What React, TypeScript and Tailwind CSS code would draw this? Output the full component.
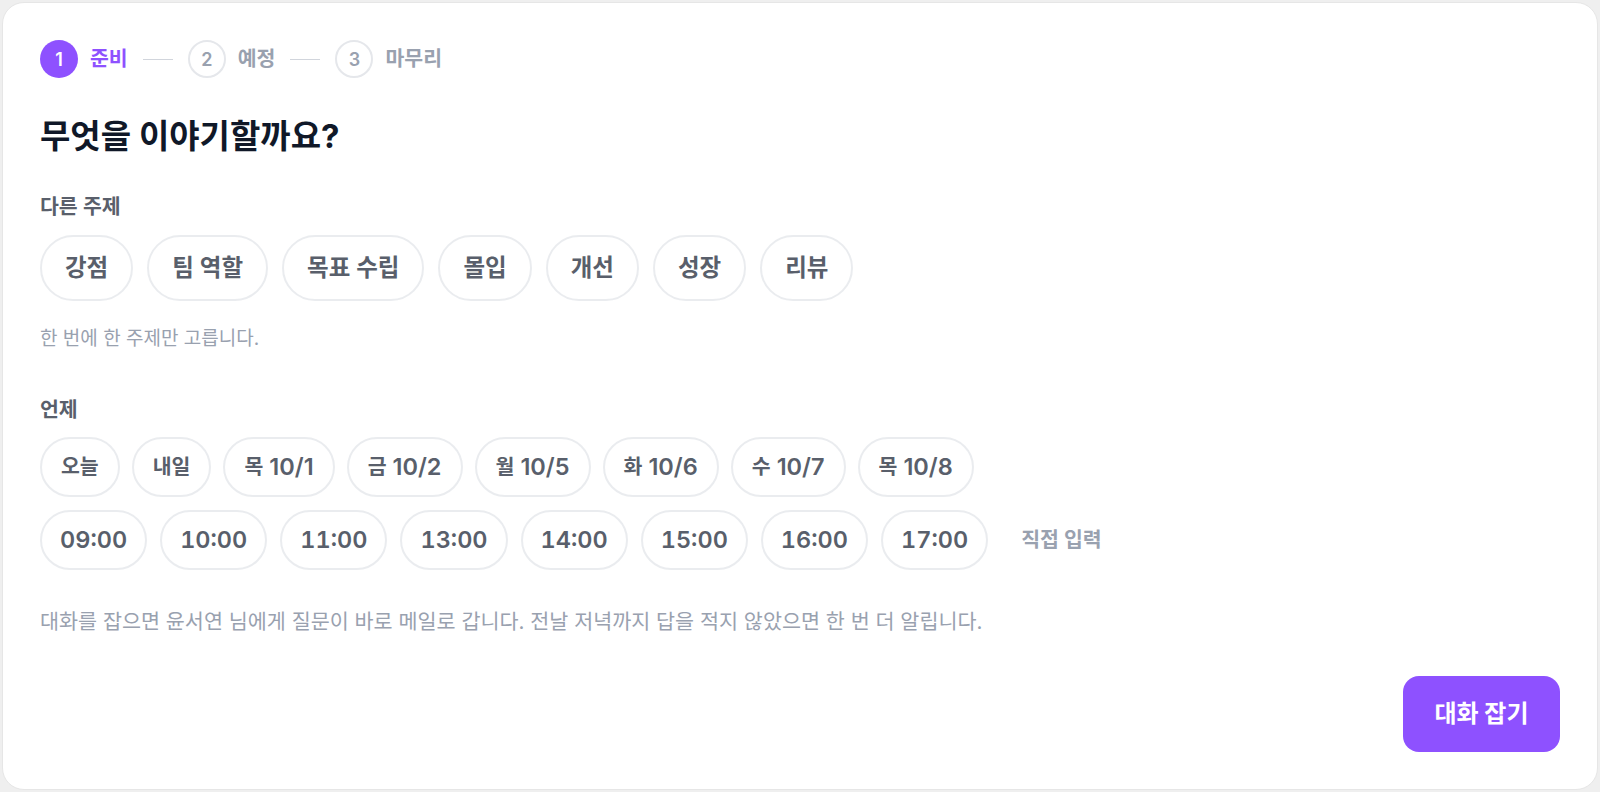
import { useState } from 'react';

const STEPS = ['준비', '예정', '마무리'];
const TOPICS = ['강점', '팀 역할', '목표 수립', '몰입', '개선', '성장', '리뷰'];
const DAYS: [string, string][] = [
  ['오늘', ''],
  ['내일', ''],
  ['목', '10/1'],
  ['금', '10/2'],
  ['월', '10/5'],
  ['화', '10/6'],
  ['수', '10/7'],
  ['목', '10/8'],
];
const TIMES = ['09:00', '10:00', '11:00', '13:00', '14:00', '15:00', '16:00', '17:00'];

function Stepper({ current }: { current: number }) {
  return (
    <div className="flex h-[38px] items-center">
      {STEPS.map((label, i) => {
        const active = i === current;
        return (
          <div key={label} className="flex items-center">
            {i > 0 && <span className="mx-[15px] h-px w-[30px] bg-gray-300" />}
            <span
              className={`grid size-[38px] place-items-center rounded-full text-[18px] font-semibold ${
                active ? 'bg-violet-500 text-white' : 'border-2 border-gray-200 text-gray-400'
              }`}
            >
              {i + 1}
            </span>
            <span
              className={`ml-3 text-[20.5px] font-semibold ${active ? 'text-violet-500' : 'text-gray-400'}`}
            >
              {label}
            </span>
          </div>
        );
      })}
    </div>
  );
}

export default function App() {
  const [topic, setTopic] = useState<string | null>(null);
  const [day, setDay] = useState<number | null>(null);
  const [time, setTime] = useState<string | null>(null);

  return (
    <div
      className="h-[792px] w-full bg-[#efefef] p-[2px]"
      style={{ fontFamily: '"Inter", "Noto Sans CJK KR", sans-serif' }}
    >
      <div className="flex h-full flex-col rounded-[22px] border border-[#e6e6e6] bg-white px-[37px] pt-[37px]">
        <Stepper current={0} />

        <h1 className="mt-[38px] text-[33px] leading-[40px] font-bold text-gray-900">무엇을 이야기할까요?</h1>

        <p className="mt-[37px] text-[20.5px] leading-7 font-semibold text-[#595f6b]">다른 주제</p>
        <div className="mt-[14px] flex gap-[14px]">
          {TOPICS.map((t) => (
            <button
              key={t}
              onClick={() => setTopic(t)}
              className={`flex h-[66px] items-center rounded-full border-2 px-[23px] text-[23.5px] font-semibold ${
                topic === t ? 'border-violet-500 text-violet-600' : 'border-gray-200/80 text-[#595f6b]'
              }`}
            >
              {t}
            </button>
          ))}
        </div>
        <p className="mt-[25px] text-[19px] leading-[26px] text-gray-400">한 번에 한 주제만 고릅니다.</p>

        <p className="mt-[44px] text-[20.5px] leading-7 font-semibold text-[#595f6b]">언제</p>
        <div className="mt-[13px] flex gap-3">
          {DAYS.map(([name, date], i) => (
            <button
              key={i}
              onClick={() => setDay(i)}
              className={`flex h-[60px] items-center rounded-full border-2 px-[19px] font-semibold ${
                day === i ? 'border-violet-500 text-violet-600' : 'border-gray-200/80 text-[#595f6b]'
              }`}
            >
              <span className="text-[20.5px]">{name}</span>
              {date && <span className="ml-[6px] text-[23.5px]">{date}</span>}
            </button>
          ))}
        </div>
        <div className="mt-[13px] flex items-center gap-[13px]">
          {TIMES.map((t) => (
            <button
              key={t}
              onClick={() => setTime(t)}
              className={`flex h-[60px] items-center rounded-full border-2 px-[18px] text-[23.5px] font-semibold tabular-nums ${
                time === t ? 'border-violet-500 text-violet-600' : 'border-gray-200/80 text-[#595f6b]'
              }`}
            >
              {t}
            </button>
          ))}
          <button className="ml-5 text-[20.5px] font-semibold text-gray-400">직접 입력</button>
        </div>

        <p className="mt-[38px] text-[20.7px] leading-7 text-gray-400">
          대화를 잡으면 윤서연 님에게 질문이 바로 메일로 갑니다. 전날 저녁까지 답을 적지 않았으면 한 번 더 알립니다.
        </p>

        <button className="mt-10 h-[76px] w-[157px] self-end rounded-2xl bg-violet-500 text-[24px] font-bold text-white">
          대화 잡기
        </button>
      </div>
    </div>
  );
}
